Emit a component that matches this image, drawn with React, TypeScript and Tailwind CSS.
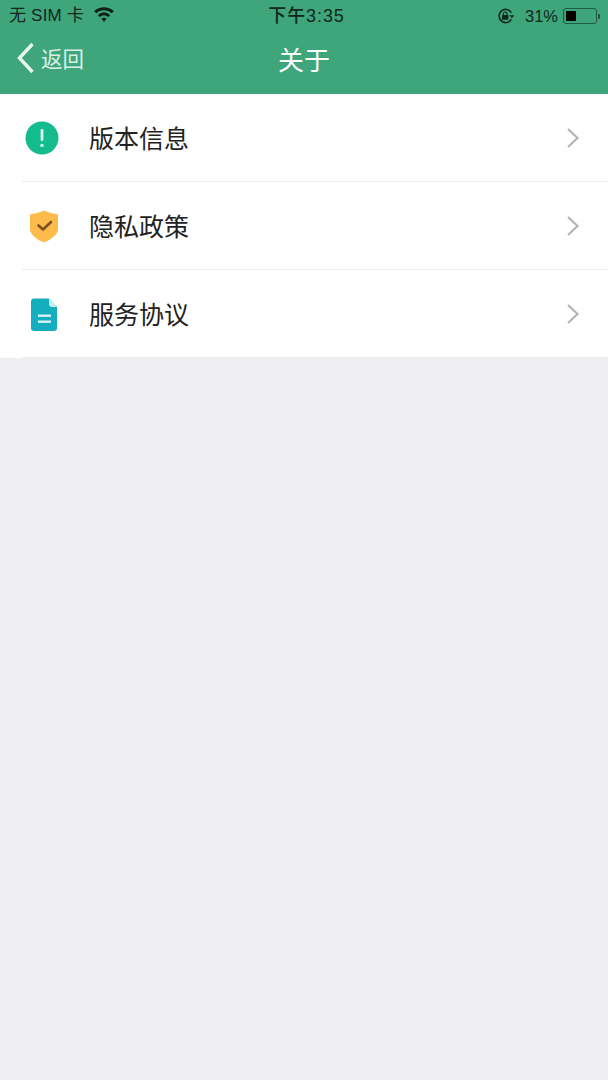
import React from 'react'

const CJK = "font-['Noto_Sans_CJK_SC','Noto_Sans',sans-serif]"

function StatusBar() {
  return (
    <div className="h-[32px] flex items-center justify-between pl-[9px] pr-[8px] text-[#10281d] font-['Liberation_Sans','Noto_Sans_CJK_SC',sans-serif]">
      <div className="w-[200px] flex items-center">
        <span className="text-[17px] tracking-[0.2px] whitespace-pre">无 SIM 卡</span>
        <svg width="20" height="17" viewBox="0 0 20 17" className="ml-[10px] -mt-[3px]">
          <path d="M1.2 6.2C6 1.6 14 1.6 18.8 6.2" fill="none" stroke="#0c1f16" strokeWidth="3" />
          <path d="M4.8 10C8 7.2 12 7.2 15.2 10" fill="none" stroke="#0c1f16" strokeWidth="2.8" />
          <path d="M7.4 12.6C9 11.4 11 11.4 12.6 12.6L10 16Z" fill="#0c1f16" />
        </svg>
      </div>
      <span className="text-[18px] tracking-[0.9px] font-medium ml-[4px]">下午3:35</span>
      <div className="w-[200px] flex items-center justify-end">
        <svg width="18" height="16" viewBox="0 0 18 16" className="mr-[10px]">
          <path d="M14.4 4.6A6.6 6.6 0 1 0 14.4 11.4" fill="none" stroke="#10281d" strokeWidth="1.6" />
          <path d="M12.4 7.2H17.4L14.9 10.2Z" fill="#10281d" />
          <rect x="5" y="7" width="6.4" height="4.8" rx="0.6" fill="#10281d" />
          <path d="M6.4 7V5.8A1.8 1.8 0 0 1 10 5.8V7" fill="none" stroke="#10281d" strokeWidth="1.1" />
        </svg>
        <span className="text-[16.5px] mr-[5px]">31%</span>
        <div className="w-[34px] h-[16px] border border-[#1f5a43] rounded-[3px] p-[2px] flex">
          <div className="w-[10px] bg-black rounded-[1px]" />
        </div>
        <div className="w-[2px] h-[5px] bg-[#1f5a43] ml-[1px] rounded-r-[1px]" />
      </div>
    </div>
  )
}

function NavBar() {
  return (
    <div className="h-[62px] flex items-start relative">
      <div className="flex items-center pl-[16px] pt-[10px]">
        <svg width="20" height="32" viewBox="0 0 20 32" className="text-[#e9f5ef]">
          <path d="M16.5 2L3.5 16L16.5 30" fill="none" stroke="currentColor" strokeWidth="3.4" />
        </svg>
        <span className={`${CJK} text-[21.5px] ml-[5px] text-[#d9efe5] leading-[32px]`}>返回</span>
      </div>
      <div className={`absolute inset-x-0 top-[10px] text-center text-white text-[26px] leading-[34px] ${CJK}`}>关于</div>
    </div>
  )
}

function InfoIcon() {
  return (
    <svg width="34" height="34" viewBox="0 0 34 34">
      <circle cx="17" cy="17" r="16.5" fill="#14bb8f" />
      <rect x="15.6" y="8" width="2.8" height="12" rx="1.2" fill="#d8f5ec" />
      <circle cx="17" cy="24.4" r="1.7" fill="#d8f5ec" />
    </svg>
  )
}

function ShieldIcon() {
  return (
    <svg width="34" height="34" viewBox="0 0 34 34">
      <path
        d="M19 1.5C23 3.2 27 4.4 31.5 5C32.5 5.2 33 5.8 33 6.8V20.5C33 26 24 31.5 19 33.5C14 31.5 5 26 5 20.5V6.8C5 5.8 5.5 5.2 6.5 5C11 4.4 15 3.2 19 1.5Z"
        fill="#fdbb4c"
      />
      <path
        d="M13.5 16.5L18 20.5L26 13"
        fill="none"
        stroke="#7a5320"
        strokeWidth="2.6"
        strokeLinecap="round"
        strokeLinejoin="round"
      />
    </svg>
  )
}

function DocIcon() {
  return (
    <svg width="34" height="35" viewBox="0 0 34 35" className="-mb-[1px]">
      <path d="M9 1.5H24L32 10V31C32 33 31 34 29 34H9C7 34 6 33 6 31V4.5C6 2.5 7 1.5 9 1.5Z" fill="#15aebf" />
      <path d="M24 1.5L32 10H27C25 10 24 9 24 7Z" fill="#c8eef2" />
      <rect x="13" y="17.5" width="13" height="2.4" fill="#d8f4f7" />
      <rect x="13" y="23.5" width="13" height="2.4" fill="#d8f4f7" />
    </svg>
  )
}

const rows = [
  { label: '版本信息', icon: <InfoIcon /> },
  { label: '隐私政策', icon: <ShieldIcon /> },
  { label: '服务协议', icon: <DocIcon /> },
]

export default function App() {
  return (
    <div className="w-[608px] h-[1080px] bg-[#eeeef3] overflow-hidden">
      <div className="bg-[#3fa57b]">
        <StatusBar />
        <NavBar />
      </div>
      <div className="bg-white">
        {rows.map((row) => (
          <div key={row.label} className="h-[88px] pl-[22px] flex flex-col">
            <div className="flex-1 flex items-center pr-[28px]">
              <div className="w-[40px] flex justify-start pl-[3px]">{row.icon}</div>
              <span className={`${CJK} ml-[27px] text-[25px] text-[#222] flex-1`}>{row.label}</span>
              <svg width="14" height="22" viewBox="0 0 14 22">
                <path d="M2 2L11.5 11L2 20" fill="none" stroke="#b5b5b5" strokeWidth="2.2" />
              </svg>
            </div>
            <div className="h-[1px] bg-[#ececec]" />
          </div>
        ))}
      </div>
    </div>
  )
}
